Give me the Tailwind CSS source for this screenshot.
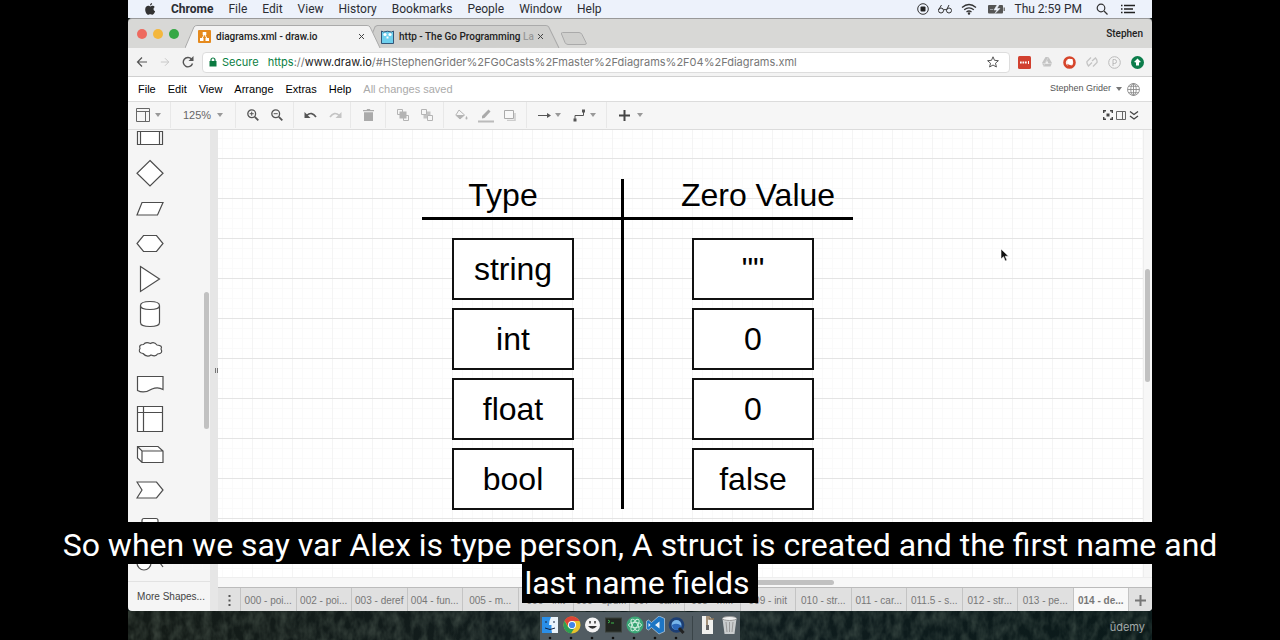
<!DOCTYPE html>
<html lang="en">
<head>
<meta charset="utf-8">
<meta name="viewport" content="width=device-width, initial-scale=1">
<title>diagrams.xml - draw.io</title>
<script src="https://cdn.jsdelivr.net/npm/@tailwindcss/browser@4"></script>
</head>
<body class="relative flex min-h-screen flex-col bg-black font-['Liberation_Sans',sans-serif]">
<main class="mx-[10%] flex flex-1 flex-col bg-[#0d1717]">

  <!-- macOS menu bar -->
  <nav class="flex h-[18px] items-center bg-[#edf2fb] pl-4 pr-3 font-['Roboto',sans-serif] text-[12px] text-[#2b2d33]">
    <svg class="mr-[15px] h-3 w-3" viewBox="0 0 12 12" fill="#333"><path d="M8.1 0C8.2 1.3 7.200 2.500 6 2.500 5.900 1.200 7 .2 8.100 0ZM10.700 4c-1.800 1-1.500 3.500.4 4.300C10.600 9.800 9.600 11.700 8.500 11.700c-.8 0-1.200-.5-2.200-.5s-1.400.5-2.100.5C2.800 11.700 1.200 9 1.200 6.400 1.200 4 2.700 2.800 4.200 2.800c.9 0 1.600.6 2.200.6s1.300-.6 2.400-.6c.8 0 1.500.4 1.900 1.200Z"/></svg>
    <div class="flex flex-1 items-center gap-[15px] whitespace-nowrap">
      <button class="font-bold">Chrome</button><button>File</button><button>Edit</button><button>View</button><button>History</button><button>Bookmarks</button><button>People</button><button>Window</button><button>Help</button>
    </div>
    <div class="flex items-center gap-2 whitespace-nowrap">
      <svg class="h-3 w-3" viewBox="0 0 12 12"><circle cx="6" cy="6" r="5.300" fill="none" stroke="#333"/><rect x="3.500" y="3.500" width="5" height="5" rx="1" fill="#222"/></svg>
      <svg class="h-3 w-4" viewBox="0 0 16 12" fill="none" stroke="#333"><circle cx="4" cy="7.500" r="2.500"/><circle cx="12" cy="7.500" r="2.500"/><path d="M6.500 7q1.500-1 3 0M1.500 7 4.500 2M9.500 7l2.500-5"/></svg>
      <svg class="h-3 w-4" viewBox="0 0 16 12" fill="none" stroke="#333" stroke-width="1.300"><path d="M1 4.500q7-6 14 0M3.200 6.800q4.800-4 9.600 0M5.500 9q2.500-2 5 0"/><circle cx="8" cy="10.500" r=".6" fill="#333"/></svg>
      <svg class="ml-[2px] h-3 w-[19px]" viewBox="0 0 19 12"><rect x="1" y="2" width="15" height="8.500" rx="1" fill="#555"/><rect x="16.500" y="4.500" width="1.500" height="3.500" fill="#777"/><path d="M3 6.500h3M10 2 7 7h3L8 10.500 13 5.500h-3l2-3.500Z" fill="#edf2fb" stroke="#edf2fb" stroke-width=".5"/></svg>
      <span class="mr-[6px]">Thu 2:59 PM</span>
      <svg class="mr-1 h-3 w-3" viewBox="0 0 12 12" fill="none" stroke="#333" stroke-width="1.200"><circle cx="5" cy="5" r="3.800"/><path d="m8 8 3.500 3.500"/></svg>
      <svg class="mr-1 h-3 w-4" viewBox="0 0 16 12" stroke="#222" stroke-width="1.500"><path d="M1 2.500h1.500M4 2.500h11M1 6h1.500M4 6h9M1 9.500h1.500M4 9.500h11"/></svg>
    </div>
  </nav>

  <!-- Browser tab strip -->
  <header class="flex h-[30px] items-end rounded-t border-t border-[#999] bg-[#d8d8d6] font-['Roboto',sans-serif] text-[10px] text-[#222]">
    <div class="flex h-full items-center gap-[6px] pl-[9px]">
      <button aria-label="Close" class="size-[10px] rounded-full bg-[#ee6a5f]"></button>
      <button aria-label="Minimise" class="size-[10px] rounded-full bg-[#f3b73e]"></button>
      <button aria-label="Zoom" class="size-[10px] rounded-full bg-[#35a845]"></button>
    </div>
    <div class="relative z-10 ml-[6px] h-[23px] w-[196px]">
      <svg class="absolute inset-0 h-full w-full" viewBox="0 0 197 23" preserveAspectRatio="none"><path d="M0 23 9 2Q10 .5 12 .5H183Q185 .5 186 2L196 23Z" fill="#f3f3f3"/><path d="M0 23 9 2Q10 .5 12 .5H183Q185 .5 186 2L196 23" fill="none" stroke="#aaa"/></svg>
      <div class="relative flex h-full items-center pl-[13px] pr-4">
        <svg class="mr-[5px] size-[13px] shrink-0" viewBox="0 0 13 13"><rect width="13" height="13" rx="1" fill="#e58a1e"/><path d="M6.500 4 3.800 9M6.500 4l2.700 5" stroke="#fff"/><path d="M4.700 2h3.600v3H4.700ZM2 8h3.500v3H2ZM7.500 8H11v3H7.500Z" fill="#fff"/></svg>
        <span class="flex-1 font-medium">diagrams.xml - draw.io</span>
        <button aria-label="Close tab"><svg class="size-[7px]" viewBox="0 0 7 7" stroke="#444"><path d="m1 1 5 5M6 1 1 6"/></svg></button>
      </div>
    </div>
    <div class="relative -ml-3 h-[23px] w-[191px]">
      <svg class="absolute inset-0 h-full w-full" viewBox="0 0 187 23" preserveAspectRatio="none"><path d="M9 22.500 3 9 6 1.500 8 .5H173Q175 .5 176 2L186 23" fill="#cfcfcd" stroke="#aaa"/></svg>
      <div class="relative flex h-full items-center pl-[12px] pr-4">
        <svg class="mr-[5px] h-[14px] w-[13px] shrink-0" viewBox="0 0 13 14"><path d="M.5 13.500V1l2 1Q6.500.5 10.500 2l2-1v12.500Z" fill="#6ed0ee" stroke="#357"/><circle cx="4" cy="4.500" r="1.600" fill="#fff"/><circle cx="9" cy="4.500" r="1.600" fill="#fff"/><path d="M5.500 6.500h2v2h-2Z" fill="#fff"/></svg>
        <span class="flex-1 whitespace-nowrap font-medium">http - The Go Programming <span class="text-[#999]">La</span></span>
        <button aria-label="Close tab"><svg class="size-[7px]" viewBox="0 0 7 7" stroke="#444"><path d="m1 1 5 5M6 1 1 6"/></svg></button>
      </div>
    </div>
    <button aria-label="New tab" class="mb-[3px] self-end"><svg class="h-[13px] w-[27px]" viewBox="0 0 27 13"><path d="M2.500.5H19q2 0 3 2l4 8q1 2-1 2H8q-2 0-3-2L1.500 2Q1 .5 2.500.5Z" fill="#cfcfcd" stroke="#aaa"/></svg></button>
    <button class="ml-auto mr-[9px] self-center font-medium">Stephen</button>
  </header>

  <!-- Address bar -->
  <div class="flex h-[29px] items-center border-b border-[#d0d0d0] bg-[#f3f3f3] pl-2 pr-2 font-['Inter',sans-serif] text-[11px]">
    <div class="flex items-center gap-3">
      <button aria-label="Back"><svg class="h-3 w-3" viewBox="0 0 12 12" fill="none" stroke="#555" stroke-width="1.200"><path d="M11 6H1.500M6 1.500 1.500 6 6 10.500"/></svg></button>
      <button aria-label="Forward"><svg class="h-3 w-[10px]" viewBox="0 0 12 12" fill="none" stroke="#c8c8c8" stroke-width="1.200"><path d="M1 6h9.500M6 1.500 10.500 6 6 10.500"/></svg></button>
      <button aria-label="Reload"><svg class="h-3 w-3" viewBox="0 0 12 12"><path d="M10.500 7.500A4.700 4.700 0 1 1 9.500 3" fill="none" stroke="#555" stroke-width="1.400"/><path d="M11.500 0v5h-5Z" fill="#555"/></svg></button>
    </div>
    <div class="ml-2 flex h-[21px] flex-1 items-center rounded-sm border border-[#ddd] bg-white px-[6px]">
      <svg class="mr-[5px] h-[10px] w-2" viewBox="0 0 8 10"><rect x=".5" y="4" width="7" height="5.500" fill="#0b7a41"/><path d="M2 4.500V3a2 2 0 0 1 4 0v1.500" fill="none" stroke="#0b7a41" stroke-width="1.200"/></svg>
      <span class="mr-[9px] text-[#0b8043]">Secure</span>
      <span class="flex-1 whitespace-nowrap text-[#777]"><span class="text-[#0b8043]">https</span>://<span class="text-[#222]">www.draw.io</span>/#HStephenGrider%2FGoCasts%2Fmaster%2Fdiagrams%2F04%2Fdiagrams.xml</span>
      <button aria-label="Bookmark"><svg class="mr-1 size-3" viewBox="0 0 12 12" fill="none" stroke="#555"><path d="m6 .8 1.500 3.500 3.900.4-2.900 2.500.9 3.800L6 9 2.600 11l.9-3.800L.6 4.700l3.900-.4Z"/></svg></button>
    </div>
    <div class="ml-2 flex items-center gap-[10px]">
      <svg class="size-[13px]" viewBox="0 0 13 13"><rect width="13" height="13" rx="1.500" fill="#d1402f"/><path d="M2 6.500h7" stroke="#fff" stroke-width="2" stroke-dasharray="1.700 .8"/><path d="M10.500 5v3" stroke="#fff"/></svg>
      <svg class="size-3" viewBox="0 0 12 12"><path d="M4.500 1h3L11 7l-1.500 3.500h-7L1 7Z" fill="#c4c4c4"/><path d="M6 4.500 7.700 8H4.300Z" fill="#f3f3f3"/><path d="m7.500 1-5 9M1 7.500h10" stroke="#e4e4e4" stroke-width=".6"/></svg>
      <svg class="size-[13px]" viewBox="0 0 13 13"><circle cx="6.500" cy="6.500" r="5" fill="#fbeeea" stroke="#d6452b" stroke-width="2.600"/><path d="M5 3h4.500v4L7 9.500 4.500 7Z" fill="#fff"/><path d="m4 8 2.500 4L10 10Z" fill="#d6452b"/></svg>
      <svg class="size-3" viewBox="0 0 12 12" fill="none" stroke="#c4c4c4" stroke-width="1.300"><path d="M5 1.500 1 5.500q-.5 2 1.500 4.500L6 6.500M7 10.500l4-4q.5-2.500-1.500-4.500L6 5"/></svg>
      <svg class="size-[13px]" viewBox="0 0 13 13" fill="none" stroke="#bbb"><circle cx="6.500" cy="6.500" r="5.800"/><path d="M5 10V3.500h1.500a2 2 0 0 1 0 4H5"/></svg>
      <svg class="size-[13px]" viewBox="0 0 13 13"><circle cx="6.500" cy="6.500" r="6.500" fill="#0c7d4b"/><path d="M6.500 2.500 10 6 8 6.500V9.500H5V6.500L3 6Z" fill="#fff"/></svg>
    </div>
  </div>

  <!-- draw.io menu -->
  <nav class="flex h-6 items-center gap-3 whitespace-nowrap bg-white pl-[10px] pr-3 text-[11px] text-black">
    <button>File</button><button>Edit</button><button>View</button><button>Arrange</button><button>Extras</button><button>Help</button>
    <span class="text-[#aaa]">All changes saved</span>
    <button class="ml-auto flex items-center gap-[5px] text-[9px] text-[#555]">Stephen Grider
      <svg class="h-1 w-[6px]" viewBox="0 0 6 4"><path d="M0 0h6L3 4Z" fill="#777"/></svg>
      <svg class="size-[13px]" viewBox="0 0 12 12" fill="none" stroke="#888" stroke-width=".8"><circle cx="6" cy="6" r="5.500"/><ellipse cx="6" cy="6" rx="2.500" ry="5.500"/><path d="M.5 6h11M1.500 3h9M1.500 9h9M6 .5v11"/></svg>
    </button>
  </nav>

  <!-- draw.io toolbar -->
  <div class="flex h-[29px] items-center border-y border-[#dcdcdc] bg-[#f6f6f6] pb-px text-[11px] text-[#666]">
    <button aria-label="View options" class="flex h-full w-[43px] items-center gap-[5px] border-r border-[#e8e8e8] pl-2">
      <svg class="size-[14px]" viewBox="0 0 14 14" fill="none" stroke="#666"><path d="M.5.5h13v13H.5ZM.5 3.500h13M9.500 3.500v10"/></svg>
      <svg class="h-1 w-[6px]" viewBox="0 0 6 4"><path d="M0 0h6L3 4Z" fill="#999"/></svg>
    </button>
    <button class="flex h-full w-[65px] items-center gap-[6px] border-r border-[#e8e8e8] pl-3">125%
      <svg class="h-1 w-[6px]" viewBox="0 0 6 4"><path d="M0 0h6L3 4Z" fill="#999"/></svg>
    </button>
    <div class="flex h-full w-[58px] items-center gap-3 border-r border-[#e8e8e8] pl-[11px]">
      <button aria-label="Zoom in"><svg class="size-3" viewBox="0 0 12 12" fill="none" stroke="#555"><circle cx="4.700" cy="4.700" r="3.900" stroke-width="1.300"/><path d="m7.800 7.800 3.500 3.500" stroke-width="1.800"/><path d="M2.700 4.700h4M4.700 2.700v4"/></svg></button>
      <button aria-label="Zoom out"><svg class="size-3" viewBox="0 0 12 12" fill="none" stroke="#555"><circle cx="4.700" cy="4.700" r="3.900" stroke-width="1.300"/><path d="m7.800 7.800 3.500 3.500" stroke-width="1.800"/><path d="M2.700 4.700h4"/></svg></button>
    </div>
    <div class="flex h-full w-[57px] items-center gap-3 border-r border-[#e8e8e8] pl-[10px]">
      <button aria-label="Undo"><svg class="h-2 w-[13px]" viewBox="0 0 13 8"><path d="M2.500 4.500Q8 0 12 6" fill="none" stroke="#555" stroke-width="1.600"/><path d="M.5 1v6h6Z" fill="#555"/></svg></button>
      <button aria-label="Redo"><svg class="h-2 w-[13px]" viewBox="0 0 13 8"><path d="M10.500 4.500Q5 0 1 6" fill="none" stroke="#c4c4c4" stroke-width="1.600"/><path d="M12.500 1v6h-6Z" fill="#c4c4c4"/></svg></button>
    </div>
    <div class="flex h-full w-[35px] items-center justify-center border-r border-[#e8e8e8]">
      <button aria-label="Delete"><svg class="h-3 w-[11px]" viewBox="0 0 11 12" fill="#aaa"><path d="M0 1h3.500l.7-1h2.600l.7 1H11v1.300H0ZM1 3.300h9V12H1Z"/></svg></button>
    </div>
    <div class="flex h-full w-[58px] items-center gap-3 border-r border-[#e8e8e8] pl-[11px]">
      <button aria-label="To front"><svg class="size-3" viewBox="0 0 12 12"><path d="M.5.5h5v5h-5ZM6.500 6.500h5v5h-5Z" fill="none" stroke="#b4b4b4"/><rect x="2.500" y="2.500" width="7" height="7" fill="#b4b4b4"/></svg></button>
      <button aria-label="To back"><svg class="size-3" viewBox="0 0 12 12"><rect x="2.500" y="2.500" width="7" height="7" fill="#c4c4c4"/><path d="M.5.5h5v5h-5ZM6.500 6.500h5v5h-5Z" fill="#f6f6f6" stroke="#b4b4b4"/></svg></button>
    </div>
    <div class="flex h-full w-[83px] items-center gap-[10px] border-r border-[#e8e8e8] pl-[11px]">
      <button aria-label="Fill colour"><svg class="h-3 w-[13px]" viewBox="0 0 13 12"><path d="M4 1 9.500 6 5 10 .8 6.200Z" fill="#f6f6f6" stroke="#b4b4b4"/><path d="M1 6h8.500L5 10ZM11.500 7q2 3 0 3.500-2-.5 0-3.500" fill="#b4b4b4"/></svg></button>
      <button aria-label="Line colour"><svg class="h-[15px] w-4" viewBox="0 0 16 15"><path d="M4 10.500V8L10.500 1.500l2 2L6.500 10Z" fill="#aaa"/><path d="M0 13.500h16" stroke="#bbb" stroke-width="2"/></svg></button>
      <button aria-label="Shadow"><svg class="h-[11px] w-3" viewBox="0 0 12 11"><path d="M11 3v7.500H3" fill="none" stroke="#ccc" stroke-width="1.500"/><path d="M.5.5h9v8h-9Z" fill="#f8f8f8" stroke="#aaa"/></svg></button>
    </div>
    <div class="flex h-full w-[80px] items-center gap-3 border-r border-[#e8e8e8] pl-[11px]">
      <button aria-label="Connection" class="flex items-center gap-1"><svg class="h-[7px] w-[13px]" viewBox="0 0 13 7"><path d="M0 3.500h10" stroke="#555"/><path d="M9 1l4 2.500L9 6Z" fill="#555"/></svg><svg class="h-1 w-[6px]" viewBox="0 0 6 4"><path d="M0 0h6L3 4Z" fill="#999"/></svg></button>
      <button aria-label="Waypoints" class="flex items-center gap-1"><svg class="size-[13px]" viewBox="0 0 13 13"><path d="M2 10V6.500h8.500V3" fill="none" stroke="#555"/><path d="M.5 9.500h3v3h-3ZM9 .5h3v3H9Z" fill="#555"/></svg><svg class="h-1 w-[6px]" viewBox="0 0 6 4"><path d="M0 0h6L3 4Z" fill="#999"/></svg></button>
    </div>
    <button aria-label="Insert" class="flex items-center gap-[7px] pl-3"><svg class="size-[11px]" viewBox="0 0 11 11" stroke="#444" stroke-width="2"><path d="M0 5.500h11M5.500 0v11"/></svg><svg class="h-1 w-[6px]" viewBox="0 0 6 4"><path d="M0 0h6L3 4Z" fill="#999"/></svg></button>
    <div class="ml-auto mr-[13px] flex items-center gap-[3px]">
      <button aria-label="Fullscreen"><svg class="size-[10px]" viewBox="0 0 10 10"><path d="M.7 3V.7H3M7 .7h2.300V3M9.300 7v2.300H7M3 9.300H.7V7" fill="none" stroke="#444" stroke-width="1.400"/><path d="M3.500 3.500h3v3h-3Z" fill="#444"/></svg></button>
      <button aria-label="Format panel"><svg class="h-[9px] w-[10px]" viewBox="0 0 10 9" fill="none" stroke="#666"><path d="M.5.5h9v8h-9ZM6.500.5v8"/></svg></button>
      <button aria-label="Collapse"><svg class="h-[9px] w-[10px]" viewBox="0 0 10 9" fill="none" stroke="#444" stroke-width="1.300"><path d="m1 .5 4 3 4-3M1 5l4 3 4-3"/></svg></button>
    </div>
  </div>

  <!-- Workspace -->
  <div class="flex h-[481px] overflow-hidden rounded-b bg-[#f5f5f5]">
    <aside class="flex w-[82px] flex-col">
      <div class="flex flex-1 justify-between">
        <svg class="ml-[8px] h-[451px] w-7" viewBox="136 130 28 451" fill="#fff" stroke="#4d4d4d" stroke-width="1.200">
          <path d="M137.500 131.500h25v13h-25ZM140.500 131.500v13M159.500 131.500v13"/>
          <path d="m150 160.500 13 12.700-13 12.700-13-12.700Z"/>
          <path d="M142 202.500h21l-5.500 12.500h-20.500Z"/>
          <path d="M143.500 235.500h13l6.500 8-6.500 8h-13l-6.500-8Z"/>
          <path d="m140.500 266.500 19 12.500-19 12.500Z"/>
          <path d="M140.500 305.500v17q0 4 9.500 4t9.500-4v-17q0-4-9.500-4t-9.500 4q0 4 9.500 4t9.500-4"/>
          <path d="M143.500 344.500q-5 0-3.500 4-2.500 4 3 5 4 4.500 8 1.500 5 2 6.500-1 6-.5 3.500-5 2-3.500-4-4-3-4-6.500-1.500-5-2-7 1Z"/>
          <path d="M137.500 376.500h25.500v13q-5-3-11-.5-8 5-14.500 1.500Z"/>
          <path d="M137.500 406.500h25v25h-25ZM143.500 406.500v25M137.500 412.500h25"/>
          <path d="M137.500 446.500h20.500l5 4.500v11.500h-21l-4.500-4.500ZM137.500 446.500l4.500 4.500h21M142 451v11.500"/>
          <path d="M137 482h19.500l6.500 8-6.500 8H137l5-8Z"/>
          <rect x="142" y="518.500" width="16" height="26" rx="2"/>
          <circle cx="144" cy="563" r="7"/><path d="m160 563 3 4"/>
        </svg>
        <div class="mr-px mt-[162px] h-[137px] w-[5px] rounded-full bg-[#c1c1c1]"></div>
      </div>
      <button class="h-[30px] border-t border-[#e2e2e2] pl-1 text-[10px] text-[#444]">More Shapes...</button>
    </aside>
    <div class="flex w-2 items-center justify-end bg-[#e6e6e6]"><span class="h-[5px] w-[3px] border-x border-[#777]"></span></div>

    <section class="flex min-w-0 flex-1 flex-col">
      <div class="flex min-h-0 flex-1">
        <div class="relative flex-1 overflow-hidden bg-white">
          <svg class="absolute inset-0 h-full w-full" aria-hidden="true">
            <defs><pattern id="grid" x="34" y="28" width="40" height="40" patternUnits="userSpaceOnUse">
              <path d="M10.500 0v40M20.500 0v40M30.500 0v40M0 10.500h40M0 20.500h40M0 30.500h40" stroke="#fafafa"/>
              <path d="M.5 0v40" stroke="#f4f4f4"/><path d="M0 .5h40" stroke="#e4e4e4"/>
            </pattern></defs>
            <rect width="100%" height="100%" fill="url(#grid)"/>
          </svg>
          <!-- Diagram nodes placed on the free canvas -->
          <div class="absolute left-[204px] top-[49px] h-[330px] w-[431px] text-[32px] leading-8 text-black">
            <div class="absolute left-0 top-[38px] h-[3px] w-full bg-black"></div>
            <div class="absolute left-[199px] top-0 h-full w-[3px] bg-black"></div>
            <div class="absolute left-[20px] top-0 w-[122px] text-center">Type</div>
            <div class="absolute left-[240px] top-0 w-[192px] whitespace-nowrap text-center">Zero Value</div>
            <div class="absolute left-[30px] top-[59px] flex w-[122px] flex-col gap-2">
              <div class="flex h-[62px] items-center justify-center border-2 border-[#111] bg-white">string</div>
              <div class="flex h-[62px] items-center justify-center border-2 border-[#111] bg-white">int</div>
              <div class="flex h-[62px] items-center justify-center border-2 border-[#111] bg-white">float</div>
              <div class="flex h-[62px] items-center justify-center border-2 border-[#111] bg-white">bool</div>
            </div>
            <div class="absolute left-[270px] top-[59px] flex w-[122px] flex-col gap-2">
              <div class="flex h-[62px] items-center justify-center border-2 border-[#111] bg-white">""</div>
              <div class="flex h-[62px] items-center justify-center border-2 border-[#111] bg-white">0</div>
              <div class="flex h-[62px] items-center justify-center border-2 border-[#111] bg-white">0</div>
              <div class="flex h-[62px] items-center justify-center border-2 border-[#111] bg-white">false</div>
            </div>
          </div>
          <svg class="absolute left-[782px] top-[118px] h-[14px] w-[10px]" viewBox="0 0 10 14"><path d="M1 1v10l2.500-2.300L5.200 13l1.800-.8-1.800-4H8.500Z" fill="#111" stroke="#fff" stroke-width=".6"/></svg>
        </div>
        <div class="w-[9px] border-l border-[#eee] bg-[#f7f7f7]"><div class="ml-px mt-[139px] h-[113px] w-[5px] rounded-full bg-[#c1c1c1]"></div></div>
      </div>
      <div class="flex h-[10px] items-center border-t border-[#eee] bg-[#f7f7f7]"><div class="ml-[36%] h-[5px] w-[30%] rounded-full bg-[#c1c1c1]"></div></div>
      <div class="flex h-6 border-t border-[#bbb] bg-[#e0e0e0] text-[10px] text-[#777]">
        <button aria-label="Pages" class="flex w-[23px] items-center justify-center border-r border-[#c4c4c4] pt-px"><svg class="h-[11px] w-[3px]" viewBox="0 0 3 11" fill="#555"><path d="M.5 0h2v2h-2ZM.5 4.500h2v2h-2ZM.5 9h2v2h-2Z"/></svg></button>
        <div class="grid flex-1 grid-cols-[repeat(16,minmax(0,1fr))] whitespace-nowrap">
          <button class="border-r border-[#c4c4c4] pt-[2px]">000 - poi...</button>
          <button class="border-r border-[#c4c4c4] pt-[2px]">002 - poi...</button>
          <button class="border-r border-[#c4c4c4] pt-[2px]">003 - deref</button>
          <button class="border-r border-[#c4c4c4] pt-[2px]">004 - fun...</button>
          <button class="border-r border-[#c4c4c4] pt-[2px]">005 - m...</button>
          <button class="border-r border-[#c4c4c4] pt-[2px]">006 - init</button>
          <button class="border-r border-[#c4c4c4] pt-[2px]">006 - upd...</button>
          <button class="border-r border-[#c4c4c4] pt-[2px]">007 - car...</button>
          <button class="border-r border-[#c4c4c4] pt-[2px]">008 - m...</button>
          <button class="border-r border-[#c4c4c4] pt-[2px]">009 - init</button>
          <button class="border-r border-[#c4c4c4] pt-[2px]">010 - str...</button>
          <button class="border-r border-[#c4c4c4] pt-[2px]">011 - car...</button>
          <button class="border-r border-[#c4c4c4] pt-[2px]">011.5 - s...</button>
          <button class="border-r border-[#c4c4c4] pt-[2px]">012 - str...</button>
          <button class="border-r border-[#c4c4c4] pt-[2px]">013 - pe...</button>
          <button class="border-r border-[#c4c4c4] bg-[#f8f8f8] pt-[2px] font-bold">014 - de...</button>
        </div>
        <button aria-label="Add page" class="flex w-[23px] items-center justify-center pt-px"><svg class="size-[11px]" viewBox="0 0 11 11" stroke="#777" stroke-width="2"><path d="M0 5.500h11M5.500 0v11"/></svg></button>
      </div>
    </section>
  </div>

  <!-- Desktop and dock -->
  <footer class="relative flex flex-1 items-end justify-center bg-linear-to-r from-[#141b17] via-[#101c1e] to-[#0b1a1a]">
    <svg class="absolute inset-0 h-full w-full opacity-30" aria-hidden="true"><filter id="foliage"><feTurbulence type="fractalNoise" baseFrequency=".12 .07" numOctaves="3" seed="4"/><feColorMatrix values="0 0 0 0 .3  0 0 0 0 .38  0 0 0 0 .3  1.600 0 0 0 -.5"/></filter><rect width="100%" height="100%" filter="url(#foliage)"/></svg>
    <div class="relative flex h-7 items-start gap-[2px] bg-[#515c62] px-px pt-1">
      <svg class="h-6 w-[19px]" viewBox="0 0 19 24"><rect x="1" y="1" width="16" height="16" fill="#eaf3fb"/><path d="M1 1h9q-2 4-2 8h2.500q-.5 4 .5 8H1Z" fill="#2b8fe8"/><path d="M5 5v2M13 5v2M4 12q5 3 10 0" stroke="#124" fill="none"/><circle cx="9" cy="22" r="1.300" fill="#111"/></svg>
      <svg class="h-6 w-[19px]" viewBox="0 0 19 24"><circle cx="10" cy="9" r="8.500" fill="#e8c22b"/><path d="M2.600 4.800A8.500 8.500 0 0 1 17.500 5H10Z" fill="#dc4437"/><path d="M2.600 4.800A8.500 8.500 0 0 0 9 17.400L12.500 12 6 11Z" fill="#2d9d55"/><path d="M2.600 4.800A8.500 8.500 0 0 1 10 .5v5L6 10Z" fill="#dc4437"/><circle cx="10" cy="9" r="4" fill="#fff"/><circle cx="10" cy="9" r="3.100" fill="#4285e8"/><circle cx="9" cy="22" r="1.300" fill="#111"/></svg>
      <svg class="h-6 w-[19px]" viewBox="0 0 19 24"><circle cx="9.500" cy="9" r="7.500" fill="#f4f4f4"/><path d="M5 10q4.500 5.500 9 0Z" fill="#333"/><path d="M7 5v2.500M12 5v2.500" stroke="#333" stroke-width="1.500"/><circle cx="9" cy="22" r="1.300" fill="#111"/></svg>
      <svg class="h-6 w-[19px]" viewBox="0 0 19 24"><rect x="1.500" y="2" width="16" height="14" fill="#20251f" stroke="#3b403b"/><path d="m4 4 2 1.500L4 7M7 7h3" stroke="#3dbb4c" fill="none"/><circle cx="9" cy="22" r="1.300" fill="#111"/></svg>
      <svg class="h-6 w-[19px]" viewBox="0 0 19 24"><circle cx="10" cy="9" r="8.500" fill="#3ba676"/><g fill="none" stroke="#d5f0e2" stroke-width=".9"><ellipse cx="10" cy="9" rx="6.500" ry="2.600"/><ellipse cx="10" cy="9" rx="6.500" ry="2.600" transform="rotate(60 10 9)"/><ellipse cx="10" cy="9" rx="6.500" ry="2.600" transform="rotate(120 10 9)"/></g><circle cx="9" cy="22" r="1.300" fill="#111"/></svg>
      <svg class="h-6 w-[19px]" viewBox="0 0 19 24"><path d="M13 0 18.500 2.500v13L13 18 5.500 11.500 2.500 14 .5 12.800V5.200L2.500 4l3 2.500Z" fill="#1c75c4" stroke="#d6e6f3" stroke-width=".6"/><path d="M13.500 5.500v7L9 9ZM2.500 7v4l2-2Z" fill="#e9f2fa"/><circle cx="9" cy="22" r="1.300" fill="#111"/></svg>
      <svg class="h-6 w-[19px]" viewBox="0 0 19 24"><circle cx="9.500" cy="9" r="7.800" fill="#1c3e73"/><circle cx="9.500" cy="9" r="5" fill="#77b5ea"/><path d="M5 9q5-3 9.500 1-1 4-5 4t-4.500-5" fill="#2b67b8"/><path d="m12 12 4.500 5" stroke="#222" stroke-width="3"/><circle cx="9" cy="22" r="1.300" fill="#111"/></svg>
      <div class="mx-[4px] h-6 w-px bg-[#3a4448]"></div>
      <svg class="h-6 w-[19px]" viewBox="0 0 19 24"><path d="M3 0h7l4 4v14H3Z" fill="#f1f1ee"/><path d="M8 0v12M10 0v3h5" stroke="#8a7355" stroke-width="1.500" fill="none"/><rect x="7" y="9" width="3" height="5" fill="#666"/></svg>
      <svg class="h-6 w-[19px]" viewBox="0 0 19 24"><path d="M2.500 2.500h14L14.500 18h-10Z" fill="#c9cccd"/><ellipse cx="9.500" cy="2.500" rx="7" ry="2" fill="#eee" stroke="#999"/><path d="M6 6l1 10M9.500 6v10M13 6l-1 10" stroke="#999"/></svg>
    </div>
    <span class="absolute bottom-[5px] right-[7px] font-['Inter',sans-serif] text-[11px] text-[#a4abab]">ûdemy</span>
  </footer>
</main>

<!-- Video caption -->
<p class="absolute inset-x-0 top-[522px] flex flex-col items-center font-['Roboto',sans-serif] text-[32px] leading-[38px] text-white"><span class="h-[42px] whitespace-nowrap bg-black px-2 pt-1">So when we say var Alex is type person, A struct is created and the first name and</span><span class="h-[39px] whitespace-nowrap bg-black pl-[2px] pr-2">last name fields</span></p>
</body>
</html>
